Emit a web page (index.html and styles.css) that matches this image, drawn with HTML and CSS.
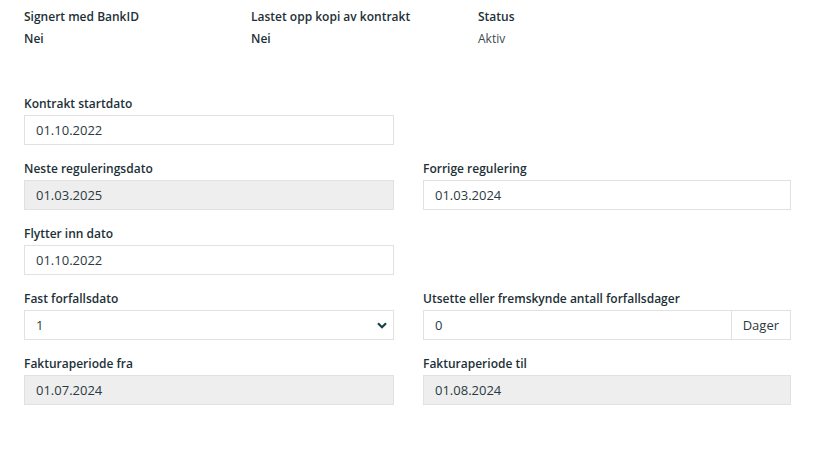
FILE: index.html
```html
<!DOCTYPE html>
<html lang="no">
<head>
  <meta charset="UTF-8">
  <title>Kontrakt</title>
  <link rel="stylesheet" href="styles.css">
</head>
<body>
  <div class="info">
    <div>
      <div class="info-label">Signert med BankID</div>
      <div class="info-value strong">Nei</div>
    </div>
    <div>
      <div class="info-label">Lastet opp kopi av kontrakt</div>
      <div class="info-value strong">Nei</div>
    </div>
    <div>
      <div class="info-label">Status</div>
      <div class="info-value">Aktiv</div>
    </div>
  </div>

  <form class="fields">
    <div class="field">
      <label>Kontrakt startdato</label>
      <div class="input">01.10.2022</div>
    </div>
    <div></div>

    <div class="field">
      <label>Neste reguleringsdato</label>
      <div class="input disabled">01.03.2025</div>
    </div>
    <div class="field">
      <label>Forrige regulering</label>
      <div class="input">01.03.2024</div>
    </div>

    <div class="field">
      <label>Flytter inn dato</label>
      <div class="input">01.10.2022</div>
    </div>
    <div></div>

    <div class="field">
      <label>Fast forfallsdato</label>
      <div class="input select">
        <span>1</span>
        <svg width="10" height="7" viewBox="0 0 10 7"><path d="M1 1.2 L5 5.2 L9 1.2" fill="none" stroke="#17404a" stroke-width="2.2"/></svg>
      </div>
    </div>
    <div class="field">
      <label>Utsette eller fremskynde antall forfallsdager</label>
      <div class="input-group">
        <div class="input grow">0</div>
        <div class="addon">Dager</div>
      </div>
    </div>

    <div class="field">
      <label>Fakturaperiode fra</label>
      <div class="input disabled">01.07.2024</div>
    </div>
    <div class="field">
      <label>Fakturaperiode til</label>
      <div class="input disabled">01.08.2024</div>
    </div>
  </form>
</body>
</html>
```

FILE: styles.css
```css
body {
  margin: 0;
  padding: 6px 24px;
  font-family: "Open Sans", Arial, sans-serif;
  color: #1d3038;
  background: #fff;
}
.info {
  display: grid;
  grid-template-columns: 227px 227px 227px;
}
.info-label {
  font-size: 12px;
  font-weight: 600;
  line-height: 22px;
}
.info-value {
  font-size: 12px;
  line-height: 22px;
  color: #3c4a50;
}
.info-value.strong {
  font-weight: 600;
  color: #1d3038;
}
.fields {
  display: grid;
  grid-template-columns: 370px 368px;
  column-gap: 29px;
  margin-top: 46px;
}
.field {
  margin-bottom: 16px;
}
.field label {
  display: block;
  font-size: 12px;
  font-weight: 600;
  line-height: 16px;
  margin-bottom: 3px;
}
.input {
  box-sizing: border-box;
  height: 30px;
  border: 1px solid #e1e1e1;
  background: #fff;
  padding: 0 11px;
  font-size: 13px;
  line-height: 28px;
  color: #2a3a42;
}
.input.disabled {
  background: #eeeeee;
}
.select {
  display: flex;
  align-items: center;
  justify-content: space-between;
  padding-right: 6px;
}
.input-group {
  display: flex;
}
.grow {
  flex: 1;
}
.addon {
  box-sizing: border-box;
  height: 30px;
  border: 1px solid #e1e1e1;
  border-left: none;
  padding: 0 11px;
  font-size: 13px;
  line-height: 28px;
  color: #2a3a42;
}
```
